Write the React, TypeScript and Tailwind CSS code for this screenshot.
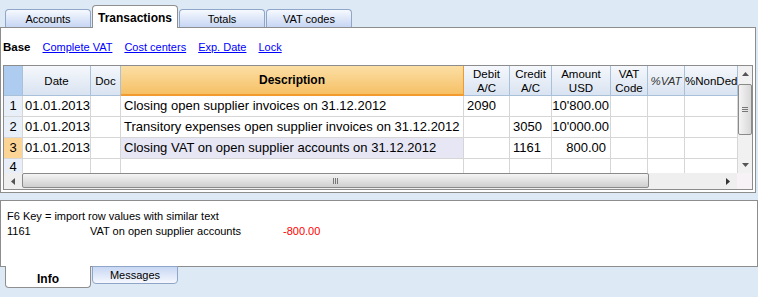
const font = { fontFamily: '"Liberation Sans", Arial, sans-serif' };

type Row = {
  n: string;
  date: string;
  desc: string;
  debit: string;
  credit: string;
  amount: string;
  current?: boolean;
};

const rows: Row[] = [
  { n: "1", date: "01.01.2013", desc: "Closing open supplier invoices on 31.12.2012", debit: "2090", credit: "", amount: "10'800.00" },
  { n: "2", date: "01.01.2013", desc: "Transitory expenses open supplier invoices on 31.12.2012", debit: "", credit: "3050", amount: "10'000.00" },
  { n: "3", date: "01.01.2013", desc: "Closing VAT on open supplier accounts on 31.12.2012", debit: "", credit: "1161", amount: "800.00", current: true },
];

function Tab({ label, active, bottom }: { label: string; active?: boolean; bottom?: boolean }) {
  if (bottom) {
    return active ? (
      <div className="relative -mt-px flex h-[22px] w-[86px] items-center justify-center rounded-b-[4px] border border-t-0 border-[#8f8f8f] bg-white pt-[4px] text-[12px] font-bold">
        {label}
      </div>
    ) : (
      <div className="-mt-px flex h-[18px] w-[86px] items-center justify-center rounded-b-[4px] border border-[#8fa6c8] bg-gradient-to-t from-[#f5f8fe] to-[#c8d7f3] text-[11px]">
        {label}
      </div>
    );
  }
  return active ? (
    <div className="relative z-10 -mb-px flex h-[23px] w-[86px] items-start justify-center rounded-t-[4px] border border-b-0 border-[#8f8f8f] bg-white pt-[3px] text-[12px] font-bold">
      {label}
    </div>
  ) : (
    <div className="flex h-[18px] w-[86px] items-center justify-center rounded-t-[4px] border border-b-0 border-[#8fa6c8] bg-gradient-to-b from-[#f6f9fe] to-[#c7d6f3] pt-[2px] text-[11px]">
      {label}
    </div>
  );
}

function HeadCell({ w, children, className = "" }: { w: string; children?: React.ReactNode; className?: string }) {
  return (
    <div
      className={`${w} flex h-[30px] shrink-0 flex-col items-center justify-center overflow-hidden whitespace-nowrap border-r border-b border-[#a9c0d9] bg-gradient-to-b from-[#f5f8fc] to-[#d9e3f1] text-[11.5px] leading-[14px] ${className}`}
    >
      {children}
    </div>
  );
}

function Cell({ w, children, className = "", h = "h-[21px]" }: { w: string; children?: React.ReactNode; className?: string; h?: string }) {
  return (
    <div className={`${w} ${h} flex shrink-0 items-center overflow-hidden whitespace-nowrap border-r border-b border-[#d6d6d6] text-[13px] ${className}`}>
      {children}
    </div>
  );
}

function DataRow({ r }: { r: Row }) {
  return (
    <div className="flex">
      <Cell w="w-[19px]" className={`justify-center border-[#c6d6ea] ${r.current ? "bg-[#fcd596]" : "bg-[#e8eff8]"}`}>
        {r.n}
      </Cell>
      <Cell w="w-[68px]" className="pl-[2px]">{r.date}</Cell>
      <Cell w="w-[30px]" />
      <Cell w="w-[343px]" className={`pl-[3px] ${r.current ? "bg-[#e6e6f5]" : ""}`}>{r.desc}</Cell>
      <Cell w="w-[46px]" className="pl-[3px]">{r.debit}</Cell>
      <Cell w="w-[42px]" className="pl-[3px]">{r.credit}</Cell>
      <Cell w="w-[59px]" className={`justify-end ${r.current ? "pr-[4px]" : "pr-px"}`}>{r.amount}</Cell>
      <Cell w="w-[37px]" />
      <Cell w="w-[37px]" />
      <Cell w="w-[53px]" />
    </div>
  );
}

export default function App() {
  return (
    <div className="flex h-[297px] w-[758px] flex-col overflow-hidden bg-[#dde9f5] text-black" style={font}>
      {/* top tabs */}
      <div className="flex h-[27px] items-end gap-px pl-[5px]">
        <Tab label="Accounts" />
        <Tab label="Transactions" active />
        <Tab label="Totals" />
        <Tab label="VAT codes" />
      </div>

      {/* main panel */}
      <div className="flex h-[166px] w-[756px] flex-col border border-[#8d8d8d] bg-white">
        <div className="flex h-[37px] items-center gap-[12px] pl-[2px] pt-[2px] text-[11px]">
          <span className="font-bold text-[11.5px]">Base</span>
          <span className="text-[#0000ff] underline">Complete VAT</span>
          <span className="text-[#0000ff] underline">Cost centers</span>
          <span className="text-[#0000ff] underline">Exp. Date</span>
          <span className="text-[#0000ff] underline">Lock</span>
        </div>

        <div className="mx-[2px] flex flex-col border border-[#8c8c8c]">
          <div className="flex">
            <div className="flex flex-col">
              <div className="flex">
                <HeadCell w="w-[19px]" className="!bg-none bg-[#aecbf0]" />
                <HeadCell w="w-[68px]">Date</HeadCell>
                <HeadCell w="w-[30px]">Doc</HeadCell>
                <HeadCell w="w-[343px]" className="border-b-2 border-b-[#f29a2e] border-r-[#f29a2e] from-[#fbdfa4] to-[#f6c064] font-bold text-[12px]">
                  Description
                </HeadCell>
                <HeadCell w="w-[46px]">
                  <span>Debit</span>
                  <span>A/C</span>
                </HeadCell>
                <HeadCell w="w-[42px]">
                  <span>Credit</span>
                  <span>A/C</span>
                </HeadCell>
                <HeadCell w="w-[59px]">
                  <span>Amount</span>
                  <span>USD</span>
                </HeadCell>
                <HeadCell w="w-[37px]">
                  <span>VAT</span>
                  <span>Code</span>
                </HeadCell>
                <HeadCell w="w-[37px]" className="italic text-[#333]">%VAT</HeadCell>
                <HeadCell w="w-[53px]" className="!items-start">%NonDed</HeadCell>
              </div>
              {rows.map((r) => (
                <DataRow key={r.n} r={r} />
              ))}
              <div className="flex">
                <Cell w="w-[19px]" h="h-[14px]" className="items-end justify-center border-b-0 border-[#c6d6ea] bg-[#e8eff8] leading-[12px]">
                  4
                </Cell>
                <Cell w="w-[68px]" h="h-[14px]" className="border-b-0" />
                <Cell w="w-[30px]" h="h-[14px]" className="border-b-0" />
                <Cell w="w-[343px]" h="h-[14px]" className="border-b-0" />
                <Cell w="w-[46px]" h="h-[14px]" className="border-b-0" />
                <Cell w="w-[42px]" h="h-[14px]" className="border-b-0" />
                <Cell w="w-[59px]" h="h-[14px]" className="border-b-0" />
                <Cell w="w-[37px]" h="h-[14px]" className="border-b-0" />
                <Cell w="w-[37px]" h="h-[14px]" className="border-b-0" />
                <Cell w="w-[53px]" h="h-[14px]" className="border-b-0" />
              </div>
            </div>

            {/* vertical scrollbar */}
            <div className="flex w-[15px] flex-col items-center bg-[#f1f1f1]">
              <div className="flex h-[16px] w-full items-center justify-center">
                <svg width="7" height="4" viewBox="0 0 7 4"><path d="M0 4 L3.5 0 L7 4 Z" fill="#555" /></svg>
              </div>
              <div className="mt-[2px] flex h-[51px] w-[14px] items-center justify-center rounded-[2px] border border-[#8a8a8a] bg-gradient-to-r from-[#f4f4f4] to-[#d8d8d8]">
                <div className="flex flex-col gap-px">
                  <div className="h-px w-[6px] bg-[#777]" />
                  <div className="h-px w-[6px] bg-[#777]" />
                  <div className="h-px w-[6px] bg-[#777]" />
                </div>
              </div>
              <div className="flex-1" />
              <div className="flex h-[16px] w-full items-center justify-center">
                <svg width="7" height="4" viewBox="0 0 7 4"><path d="M0 0 L3.5 4 L7 0 Z" fill="#555" /></svg>
              </div>
            </div>
          </div>

          {/* horizontal scrollbar */}
          <div className="flex h-[16px] bg-[#efefef]">
            <div className="flex w-[18px] items-center justify-center">
              <svg width="4" height="7" viewBox="0 0 4 7"><path d="M4 0 L0 3.5 L4 7 Z" fill="#555" /></svg>
            </div>
            <div className="flex h-[15px] w-[627px] items-center justify-center rounded-[2px] border border-[#8a8a8a] bg-gradient-to-b from-[#f4f4f4] to-[#cfcfcf]">
              <div className="flex gap-px">
                <div className="h-[6px] w-px bg-[#777]" />
                <div className="h-[6px] w-px bg-[#777]" />
                <div className="h-[6px] w-px bg-[#777]" />
              </div>
            </div>
            <div className="flex-1" />
            <div className="flex w-[18px] items-center justify-center">
              <svg width="4" height="7" viewBox="0 0 4 7"><path d="M0 0 L4 3.5 L0 7 Z" fill="#333" /></svg>
            </div>
            <div className="w-[15px] bg-[#f6f2f6]" />
          </div>
        </div>
      </div>

      {/* info panel */}
      <div className="mt-[7px] flex h-[67px] w-[758px] flex-col border border-[#8d8d8d] bg-white pl-[6px] pt-[8px] text-[11px] leading-[15px]">
        <div>F6 Key = import row values with similar text</div>
        <div className="flex">
          <span className="w-[83px]">1161</span>
          <span className="w-[193px]">VAT on open supplier accounts</span>
          <span className="text-[#ff0000]">-800.00</span>
        </div>
      </div>

      {/* bottom tabs */}
      <div className="flex items-start gap-px pl-[5px]">
        <Tab label="Info" active bottom />
        <Tab label="Messages" bottom />
      </div>
    </div>
  );
}
